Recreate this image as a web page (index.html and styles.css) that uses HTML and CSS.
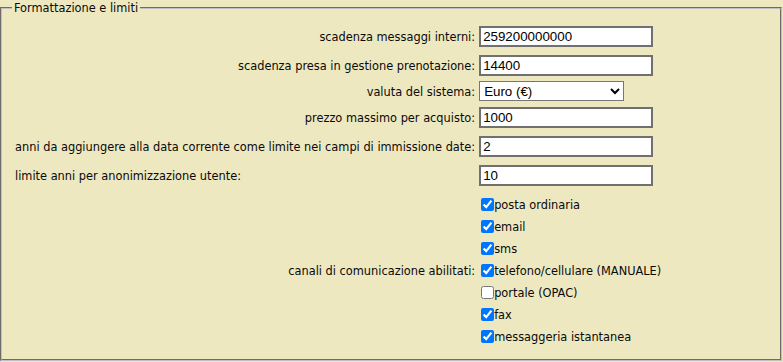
FILE: index.html
```html
<!DOCTYPE html>
<html>
<head>
<meta charset="utf-8">
<link rel="stylesheet" href="styles.css">
</head>
<body>
<fieldset class="box">
  <legend class="box-title">Formattazione e limiti</legend>
  <table class="form">
    <tr class="row h28">
      <td class="lbl">scadenza messaggi interni:</td>
      <td class="fld"><input class="txt" type="text" value="259200000000"></td>
    </tr>
    <tr class="row h30">
      <td class="lbl">scadenza presa in gestione prenotazione:</td>
      <td class="fld"><input class="txt" type="text" value="14400"></td>
    </tr>
    <tr class="row h22">
      <td class="lbl">valuta del sistema:</td>
      <td class="fld"><select class="sel"><option>Euro (€)</option></select></td>
    </tr>
    <tr class="row h30">
      <td class="lbl">prezzo massimo per acquisto:</td>
      <td class="fld"><input class="txt" type="text" value="1000"></td>
    </tr>
    <tr class="row h29">
      <td class="lbl left">anni da aggiungere alla data corrente come limite nei campi di immissione date:</td>
      <td class="fld"><input class="txt" type="text" value="2"></td>
    </tr>
    <tr class="row h29">
      <td class="lbl left">limite anni per anonimizzazione utente:</td>
      <td class="fld"><input class="txt" type="text" value="10"></td>
    </tr>
    <tr class="row">
      <td class="lbl">canali di comunicazione abilitati:</td>
      <td class="fld checks">
        <label class="chk"><input type="checkbox" checked>posta ordinaria</label>
        <label class="chk"><input type="checkbox" checked>email</label>
        <label class="chk"><input type="checkbox" checked>sms</label>
        <label class="chk"><input type="checkbox" checked>telefono/cellulare (MANUALE)</label>
        <label class="chk"><input type="checkbox">portale (OPAC)</label>
        <label class="chk"><input type="checkbox" checked>fax</label>
        <label class="chk"><input type="checkbox" checked>messaggeria istantanea</label>
      </td>
    </tr>
  </table>
</fieldset>
</body>
</html>
```

FILE: styles.css
```css
html, body {
  margin: 0;
  padding: 0;
  background: #eee8c0;
}
body {
  font-family: "DejaVu Sans", Tahoma, sans-serif;
  font-stretch: condensed;
  font-size: 12.65px;
  color: #0a0a0a;
}
.box {
  margin: 0;
  width: 782px;
  height: 361px;
  box-sizing: border-box;
  border: 2px groove #c0c0c0;
  padding: 7px 10px 0 11px;
}
.box-title {
  padding: 0 2px;
  margin-left: -1px;
  line-height: 15px;
}
.form {
  border-collapse: collapse;
}
.form td {
  padding: 0;
}
.h28 { height: 28px; }
.h30 { height: 30px; }
.h22 { height: 22px; }
.h29 { height: 29px; }
.lbl {
  text-align: right;
  vertical-align: middle;
  padding-right: 4px !important;
  padding-left: 2px !important;
  white-space: nowrap;
}
.lbl.left {
  text-align: left;
}
.fld {
  vertical-align: middle;
}
.txt {
  box-sizing: border-box;
  width: 174px;
  height: 21px;
  margin: 0;
  border: 2px solid #707070;
  padding: 1px 2px;
  font-family: "Liberation Sans", Arial, sans-serif;
  font-size: 13.33px;
  color: #000;
  background: #fff;
}
.sel {
  box-sizing: border-box;
  width: 145px;
  height: 20px;
  margin: 0;
  font-family: "Liberation Sans", Arial, sans-serif;
  font-size: 13.33px;
  color: #000;
  background: #fff;
}
.checks {
  padding-top: 3px !important;
  padding-bottom: 4px !important;
}
.chk {
  display: flex;
  align-items: center;
  height: 22px;
  white-space: nowrap;
}
.chk input {
  width: 13px;
  height: 13px;
  margin: 0 0 0 2px;
}
```
